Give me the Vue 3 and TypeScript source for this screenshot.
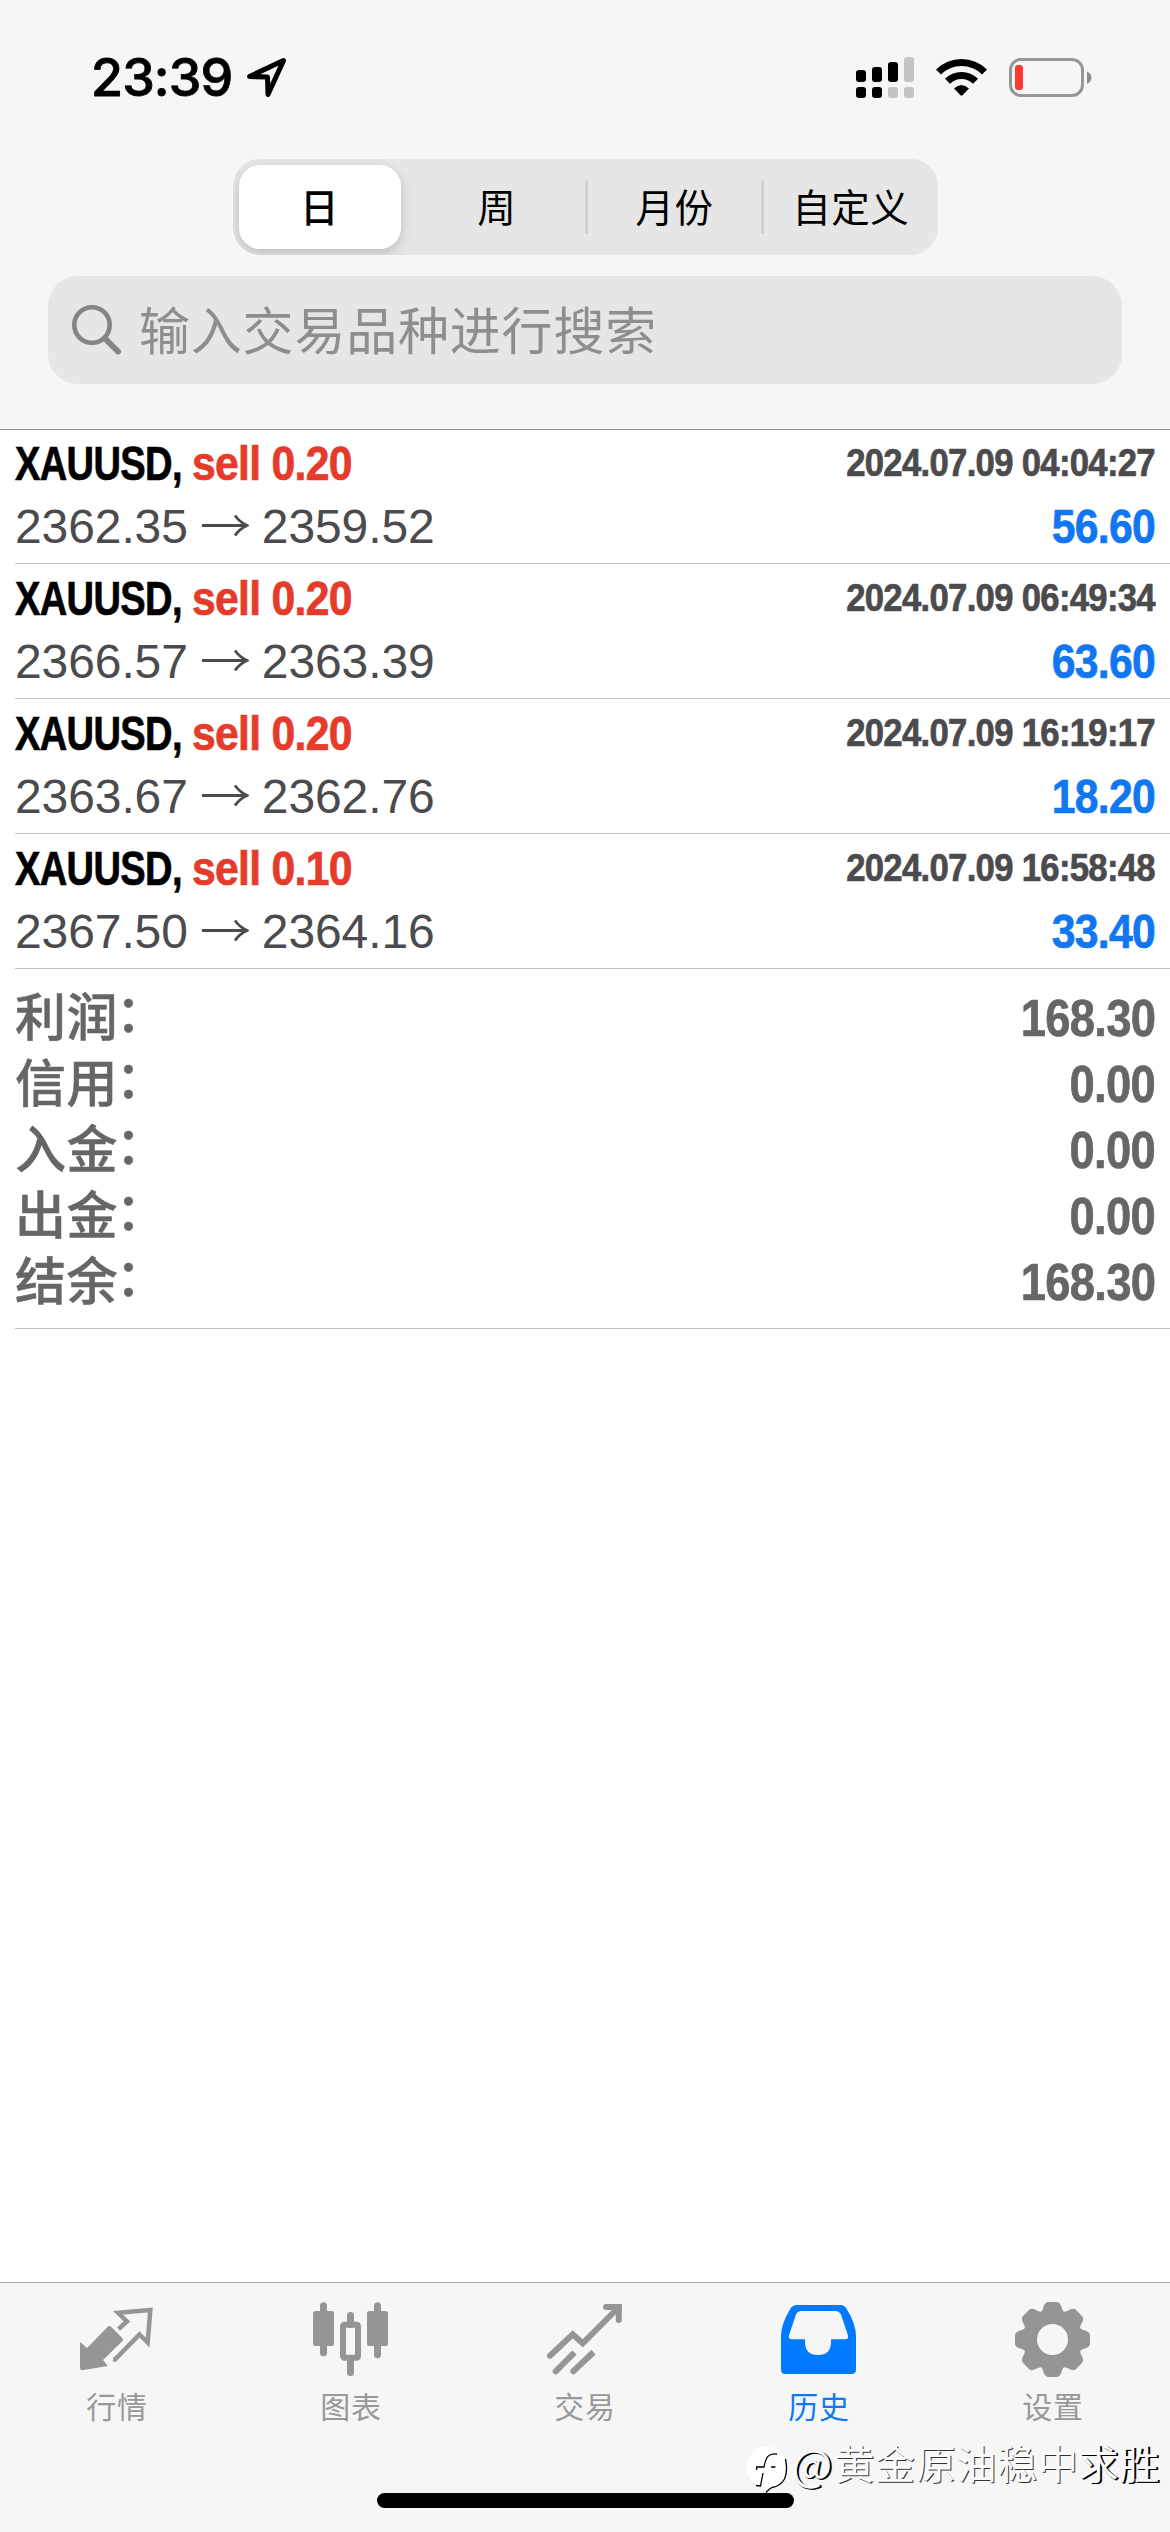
<script setup lang="ts">
interface Deal {
  symbol: string
  side: string
  open: string
  close: string
  time: string
  profit: string
}

const periods: string[] = ['日', '周', '月份', '自定义']

const deals: Deal[] = [
  { symbol: 'XAUUSD,', side: 'sell 0.20', open: '2362.35', close: '2359.52', time: '2024.07.09 04:04:27', profit: '56.60' },
  { symbol: 'XAUUSD,', side: 'sell 0.20', open: '2366.57', close: '2363.39', time: '2024.07.09 06:49:34', profit: '63.60' },
  { symbol: 'XAUUSD,', side: 'sell 0.20', open: '2363.67', close: '2362.76', time: '2024.07.09 16:19:17', profit: '18.20' },
  { symbol: 'XAUUSD,', side: 'sell 0.10', open: '2367.50', close: '2364.16', time: '2024.07.09 16:58:48', profit: '33.40' },
]

const totals: { label: string; value: string }[] = [
  { label: '利润', value: '168.30' },
  { label: '信用', value: '0.00' },
  { label: '入金', value: '0.00' },
  { label: '出金', value: '0.00' },
  { label: '结余', value: '168.30' },
]

const gearTeeth: number[] = [0, 45, 90, 135, 180, 225, 270, 315]
</script>

<template>
  <div class="screen">
    <header class="header">
      <div class="status">
        <span class="clock">23:39</span>
        <svg class="location" width="44" height="44" viewBox="0 0 44 44">
          <path d="M6.5 22.5 L40.5 6.5 L25 40.5 L24.5 23 Z" fill="none" stroke="#000" stroke-width="5" stroke-linejoin="round" />
        </svg>
        <svg class="indicators" width="250" height="55" viewBox="0 0 250 55">
          <g>
            <rect x="6" y="20" width="10" height="12" rx="3" />
            <rect x="22" y="17" width="10" height="15" rx="3" />
            <rect x="38" y="12" width="10" height="20" rx="3" />
            <rect x="54" y="7" width="10" height="25" rx="3" fill="#c4c4c4" />
            <rect x="6" y="37" width="10" height="11" rx="3" />
            <rect x="22" y="37" width="10" height="11" rx="3" />
            <rect x="38" y="37" width="10" height="11" rx="3" fill="#c4c4c4" />
            <rect x="54" y="37" width="10" height="11" rx="3" fill="#c4c4c4" />
          </g>
          <g fill="none" stroke="#000">
            <path d="M88.500 22.000 A32.500 32.500 0 0 1 134.500 22.000" stroke-width="7" />
            <path d="M97.500 31.200 A19.800 19.800 0 0 1 125.500 31.200" stroke-width="7" />
          </g>
          <path d="M104 38.500 Q111.500 31.500 119 38.500 L112.500 45.300 Q111.500 46.200 110.500 45.300 Z" />
          <rect x="160.500" y="9.500" width="72" height="36" rx="10.500" fill="none" stroke="#979797" stroke-width="3" />
          <rect x="165" y="15" width="8" height="25" rx="3" fill="#fb3a30" />
          <path d="M237 21.500 Q241.500 24 241.500 27.700 Q241.500 31.500 237 34 Z" fill="#8c8c8c" />
        </svg>
      </div>

      <nav class="segments">
        <span v-for="(period, i) in periods" :key="period" class="segment" :class="{ chosen: i === 0, ruled: i > 1 }">
          <span class="segment-face">{{ period }}</span>
        </span>
      </nav>

      <div class="search">
        <svg width="56" height="56" viewBox="0 0 56 56">
          <circle cx="24" cy="23" r="17.700" fill="none" stroke="#858587" stroke-width="4.600" />
          <path d="M37 36.500 L50 49.500" stroke="#858587" stroke-width="6" stroke-linecap="round" />
        </svg>
        <span class="hint">输入交易品种进行搜索</span>
      </div>
    </header>

    <main class="content">
      <article v-for="deal in deals" :key="deal.time" class="deal">
        <div class="line">
          <span class="symbol squeeze-left">{{ deal.symbol }}</span>
          <span class="side squeeze-left">{{ deal.side }}</span>
          <span class="time squeeze-right">{{ deal.time }}</span>
        </div>
        <div class="line">
          <span class="price">{{ deal.open }}</span>
          <svg class="arrow" width="48" height="60" viewBox="0 0 48 60">
            <path d="M1 28.500 H45 M34 18.500 Q38.500 25 46 28.500 Q38.500 32 34 38.500" fill="none" stroke="#4b4b4e" stroke-width="2.800" />
          </svg>
          <span class="price">{{ deal.close }}</span>
          <span class="profit squeeze-right">{{ deal.profit }}</span>
        </div>
      </article>

      <section class="totals">
        <div v-for="total in totals" :key="total.label" class="total">
          <span class="total-label">{{ total.label }}<span class="colon">：</span></span>
          <span class="total-value squeeze-right">{{ total.value }}</span>
        </div>
      </section>
    </main>

    <footer class="tabbar">
      <div class="tab">
        <svg width="84" height="80" viewBox="0 0 84 80">
          <path d="M5 42 L12 48 L33 26.500 Q34.500 25.500 36 26.700 L47.500 38.200 Q48.500 39.700 47.500 41 L28 60 L32.800 66 L7 70.300 Q5 70 5 68 Z" fill="#959595" />
          <path d="M38 59.500 H40 L64.500 34.500 L72.700 42.500 L75.300 10 L43 12.800 L52 21.500 L43.500 29" fill="none" stroke="#959595" stroke-width="4.500" />
        </svg>
        <span>行情</span>
      </div>
      <div class="tab">
        <svg width="84" height="80" viewBox="0 0 84 80" fill="#959595">
          <rect x="11" y="2.300" width="7" height="54" rx="3.500" />
          <rect x="4" y="11" width="21" height="35" rx="2.500" />
          <rect x="65" y="2.300" width="7" height="56" rx="3.500" />
          <rect x="58" y="11" width="21" height="35" rx="2.500" />
          <rect x="38" y="12" width="7" height="16" rx="3.500" />
          <rect x="38" y="56" width="7" height="20" rx="3.500" />
          <rect x="34" y="24.700" width="15" height="33" rx="1.500" fill="none" stroke="#959595" stroke-width="6" />
        </svg>
        <span>图表</span>
      </div>
      <div class="tab">
        <svg width="84" height="80" viewBox="0 0 84 80" fill="none" stroke="#959595" stroke-width="6" stroke-linecap="round">
          <path d="M7 55.700 L29.700 34.300 L39.700 43.300 L75 8" stroke-linejoin="miter" />
          <path d="M63 7 H75.800 V20" />
          <path d="M76 4 H77.500 Q79 4 79 6 V9 L74 9 Z" fill="#959595" stroke="none" />
          <path d="M12.700 71.300 L29 55" />
          <path d="M30.300 71.300 L48 54.500" />
          <path d="M26 58 L31.500 52.500 M45 57.500 L50.500 52.300" stroke-linecap="butt" />
        </svg>
        <span>交易</span>
      </div>
      <div class="tab active">
        <svg width="84" height="80" viewBox="0 0 84 80">
          <path fill="#027aff" fill-rule="evenodd" d="M20 5 H63.500 Q67.500 5 69.500 8.500 Q79 24 79 36 V69.500 Q79 74 74.500 74 H8.500 Q4 74 4 69.500 V36 Q4 24 13.500 8.500 Q15.500 5 20 5 Z M24.500 11 Q20.500 11 19 14.500 L12.300 34.500 Q10.800 39.300 14.500 39.300 H28 V42 Q28 55 41 55 Q54 55 54 42 V39.300 H68.500 Q72.200 39.300 70.700 34.500 L64 14.500 Q62 11 58.500 11 Z" />
        </svg>
        <span>历史</span>
      </div>
      <div class="tab">
        <svg width="84" height="80" viewBox="0 0 84 80">
          <g transform="translate(41.5 39.5)" fill="#959595">
            <circle r="22" fill="none" stroke="#959595" stroke-width="13" />
            <path v-for="angle in gearTeeth" :key="angle" :transform="`rotate(${angle})`" d="M-13 -24 Q-11.500 -28 -9.800 -30 Q-8 -37.500 -4.500 -37.500 H4.500 Q8 -37.500 9.800 -30 Q11.500 -28 13 -24 Z" />
          </g>
        </svg>
        <span>设置</span>
      </div>
      <i class="home-indicator"></i>
      <div class="watermark">
        <svg width="46" height="52" viewBox="0 0 46 52">
          <circle cx="23" cy="22" r="20.500" fill="#fff" />
          <path d="M41.500 14 Q44 26 40.500 34 Q36.500 41 28 42.500 Q25.500 43.500 22 47.500 M33 9 Q26 8.500 23 12.500 Q21 16 20 22 H12.700 V25 M27 22 H31.500 M19 28 L16.500 41 L12 40.500" fill="none" stroke="#000" stroke-width="1.300" />
        </svg>
        <span class="bold-edge at">@</span><span>黄金原油稳中</span><span class="bold-edge">求胜</span>
      </div>
    </footer>
  </div>
</template>

<style>
body {
  margin: 0;
  background: #fff;
}
</style>

<style scoped>
.screen {
  display: flex;
  flex-direction: column;
  width: 1170px;
  height: 2532px;
  overflow: hidden;
  background: #fff;
  font-family: "Liberation Sans", "Noto Sans CJK SC", sans-serif;
}
.header {
  position: relative;
  flex: none;
  display: flex;
  flex-direction: column;
  align-items: center;
  height: 429px;
  background: #f6f6f6;
  box-shadow: 0 1px 0 #919193;
}
.status {
  display: flex;
  align-items: flex-start;
  align-self: stretch;
  box-sizing: border-box;
  height: 159px;
  padding: 50px 70px 0 91px;
}
.clock {
  width: 152px;
  font: 500 52px/56px Inter, sans-serif;
  letter-spacing: -0.9px;
  -webkit-text-stroke: 0.8px currentColor;
}
.location {
  margin-top: 4px;
}
.indicators {
  margin-left: auto;
}
.segments {
  display: flex;
  flex: none;
  width: 705px;
  height: 96px;
  border-radius: 27px;
  background: #e6e6e6;
  overflow: hidden;
}
.segment {
  display: flex;
  flex: 1;
  align-items: center;
}
.segment-face {
  flex: 1;
  text-align: center;
  font: 400 38.5px/93px "Noto Sans CJK SC", sans-serif;
  letter-spacing: 0.5px;
  padding-bottom: 4px;
}
.ruled::before {
  content: "";
  width: 3px;
  height: 54px;
  border-radius: 2px;
  background: #d0d0d0;
}
.chosen .segment-face {
  flex: none;
  width: 162px;
  height: 84px;
  margin-left: 6px;
  padding: 0;
  border-radius: 21px;
  background: #fff;
  box-shadow: 0 6px 14px rgba(0, 0, 0, 0.13), 0 1px 10px rgba(0, 0, 0, 0.06);
  font-weight: 500;
  line-height: 80px;
}
.search {
  display: flex;
  flex: none;
  align-items: center;
  box-sizing: border-box;
  width: 1074px;
  height: 108px;
  margin-top: 21px;
  padding-left: 20px;
  border-radius: 30px;
  background: #e6e6e8;
}
.hint {
  margin-left: 15px;
  padding-bottom: 4px;
  font: 400 51px/80px "Noto Sans CJK SC", sans-serif;
  letter-spacing: 0.8px;
  color: #8e8e90;
}
.content {
  flex: 1;
}
.deal {
  display: flex;
  flex-direction: column;
  gap: 3px;
  box-sizing: border-box;
  height: 135px;
  margin-left: 15px;
  padding: 5px 16px 0 0;
  border-bottom: 1px solid #c3c3c5;
}
.line {
  display: flex;
  height: 60px;
  white-space: pre;
  font-size: 48px;
  line-height: 60px;
}
.squeeze-left,
.squeeze-right {
  font-weight: 700;
  white-space: pre;
  letter-spacing: -0.8px;
  -webkit-text-stroke: 0.7px currentColor;
}
.squeeze-left {
  transform-origin: left center;
}
.squeeze-right {
  margin-left: auto;
  margin-right: -0.8px;
  transform-origin: right center;
}
.symbol {
  width: 177px;
  transform: scaleX(0.793);
}
.side {
  width: 160px;
  color: #e43b2b;
  transform: scaleX(0.89);
}
.time {
  font-size: 39px;
  line-height: 57px;
  color: #4b4b4e;
  transform: scaleX(0.89);
}
.price {
  color: #4b4b4e;
  letter-spacing: -0.1px;
}
.arrow {
  margin: 0 13px;
}
.profit {
  color: #1077f1;
  transform: scaleX(0.89);
}
.totals {
  box-sizing: border-box;
  height: 360px;
  margin-left: 15px;
  padding: 16px 16px 0 0;
  border-bottom: 1px solid #c3c3c5;
}
.total {
  display: flex;
  align-items: flex-start;
  height: 66px;
  color: #666;
}
.total-label {
  margin-top: 1px;
  font: 500 51px/66px "Liberation Sans", "Noto Sans CJK SC", sans-serif;
  letter-spacing: 0.4px;
  -webkit-text-stroke: 0.5px currentColor;
}
.colon {
  position: relative;
  top: -4px;
  left: -2px;
}
.total-value {
  font-size: 51px;
  line-height: 67px;
  transform: scaleX(0.89);
}
.tabbar {
  position: relative;
  display: flex;
  flex: none;
  box-sizing: border-box;
  height: 250px;
  border-top: 1px solid #ababab;
  background: #f6f6f6;
}
.tab {
  display: flex;
  flex: 1;
  flex-direction: column;
  align-items: center;
  padding-top: 17px;
  font: 400 30px/44px "Noto Sans CJK SC", sans-serif;
  letter-spacing: 0.8px;
  color: #999;
}
.tab span {
  margin-top: 3px;
}
.tab.active {
  color: #1078f2;
}
.home-indicator {
  position: absolute;
  left: 377px;
  bottom: 24px;
  width: 417px;
  height: 15px;
  border-radius: 8px;
  background: #000;
}
.watermark {
  position: absolute;
  right: 10px;
  bottom: 40px;
  display: flex;
  align-items: center;
  height: 60px;
  font: 400 40px/60px "Noto Sans CJK SC", sans-serif;
  letter-spacing: 0.7px;
  color: #fafafa;
  text-shadow: 1px 1px 0 #333;
}
.watermark svg {
  margin: 18px 1px 0 0;
}
.watermark .at {
  width: 43px;
  font-size: 43px;
}
.watermark .bold-edge {
  text-shadow: 1px 1px 0 #000, 2px 1px 0 #000;
}
</style>
